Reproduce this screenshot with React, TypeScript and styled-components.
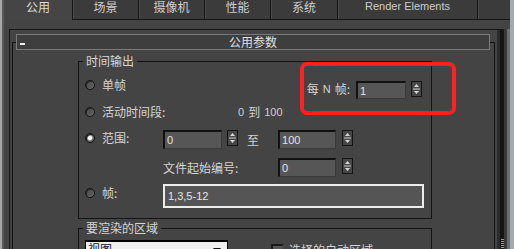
import React from 'react';
import styled, { createGlobalStyle, css } from 'styled-components';

const GlobalStyle = createGlobalStyle`
  html, body { margin: 0; padding: 0; background: #444; }
  body { font-family: "Noto Sans CJK SC", "Liberation Sans", sans-serif; }
`;

const Screen = styled.div`
  position: relative;
  width: 514px;
  height: 249px;
  overflow: hidden;
  display: flex;
  background: #444;
  color: #d4d4d4;
  font-family: "Noto Sans CJK SC", "Liberation Sans", sans-serif;
  font-size: 12px;
`;

const EdgeLeft = styled.div`
  flex: none;
  width: 2px;
  background: #a8a8a8;
  border-right: 2px solid #5a5a5a;
`;

const EdgeRight = styled.div`
  flex: none;
  width: 4px;
  background: #a3abb1;
`;

const Main = styled.div`
  flex: 1;
  min-width: 0;
  display: flex;
  flex-direction: column;
`;

const TabBar = styled.div`
  flex: none;
  display: flex;
  height: 20px;
`;

const Tab = styled.div<{ $w: number; $active?: boolean; $latin?: boolean }>`
  flex: none;
  box-sizing: border-box;
  width: ${p => p.$w}px;
  height: 20px;
  text-align: center;
  line-height: 13px;
  white-space: nowrap;
  ${p =>
    p.$active
      ? css`
          background: #454545;
          color: #dcdcdc;
        `
      : css`
          background: #3b3b3b;
          color: #cdcdcd;
          border-left: 1px solid #151515;
          border-bottom: 1px solid #151515;
          box-shadow: inset 1px 0 #4b4b4b;
        `}
  ${p =>
    p.$latin &&
    css`
      font-family: "Liberation Sans", sans-serif;
      font-size: 11px;
      line-height: 12px;
    `}
`;

const Body = styled.div`
  flex: 1;
  display: flex;
  padding: 9px 0 0 5px;
  min-height: 0;
`;

const Panel = styled.div`
  flex: none;
  display: flex;
  border-left: 1px solid #161616;
  border-top: 1px solid #161616;
  padding-left: 2px;
`;

const Gutter = styled.div`
  flex: 1;
  background: #393939;
  border-right: 3px solid #6e6e6e;
`;

const Scrollbar = styled.div`
  flex: none;
  width: 7px;
  margin-left: 2px;
  display: flex;
  flex-direction: column;
  justify-content: flex-end;
  background: linear-gradient(to right, #2b2b2b 0 3px, #141414 3px 7px);
`;

const Grip = styled.div`
  width: 3px;
  height: 12px;
  margin: 0 0 -2px 4px;
  background: repeating-linear-gradient(to bottom, #9a9a9a 0 1px, #1a1a1a 1px 2px);
`;

const Rollout = styled.div`
  flex: none;
  box-sizing: border-box;
  width: 483px;
  margin-top: 12px;
  border: 1px solid #121212;
  border-bottom: none;
  padding: 0 4px 0 3px;
`;

const RolloutHeader = styled.div`
  box-sizing: border-box;
  height: 16px;
  margin-top: -9px;
  border: 1px solid #7a7a7a;
  background: #3e3e3e;
  display: grid;
  grid-template-columns: 1fr auto 1fr;
  align-items: center;
`;

const Collapse = styled.span`
  justify-self: start;
  align-self: end;
  width: 5px;
  height: 2px;
  margin: 0 0 4px 3px;
  background: #f2f2f2;
`;

const HeaderTitle = styled.span`
  line-height: 14px;
  color: #e2e2e2;
`;

const Group = styled.fieldset<{ $gap: number }>`
  box-sizing: border-box;
  width: 354px;
  margin: ${p => p.$gap}px 0 0 62px;
  padding: 0;
  min-width: 0;
  border: 1px solid #141414;
`;

const GroupTitle = styled.legend`
  margin-left: 4px;
  padding: 0 3px;
  line-height: 14px;
  font-size: 12px;
  color: #d6d6d6;
`;

const GroupBody = styled.div<{ $top?: number; $bottom?: number }>`
  display: flex;
  flex-direction: column;
  padding: ${p => p.$top ?? 0}px 9px ${p => p.$bottom ?? 0}px 6px;
`;

const Row = styled.div<{ $h: number; $mt: number; $align?: string }>`
  display: flex;
  align-items: ${p => p.$align ?? 'center'};
  height: ${p => p.$h}px;
  margin-top: ${p => p.$mt}px;
`;

const RadioItem = styled.div<{ $lift?: number }>`
  flex: none;
  width: 78px;
  height: 18px;
  display: flex;
  align-items: center;
  gap: 7px;
  margin-bottom: ${p => (p.$lift ?? 0) * 2}px;
`;

const Radio = styled.span<{ $on?: boolean }>`
  flex: none;
  box-sizing: border-box;
  width: 10px;
  height: 10px;
  border-radius: 50%;
  border: 1px solid #121212;
  box-shadow: inset -1px -1px 0 #6a6a6a, inset 1px 1px 0 #2a2a2a;
  background: ${p =>
    p.$on
      ? 'radial-gradient(circle, #ffffff 0 1.6px, #bdbdbd 2.3px, #5a5a5a 3.2px)'
      : '#555555'};
`;

const Label = styled.span<{ $w?: number }>`
  white-space: nowrap;
  line-height: 14px;
  ${p => p.$w !== undefined && css`width: ${p.$w}px; flex: none;`}
`;

const Num = styled.span`
  font-family: "Liberation Sans", sans-serif;
  font-size: 11px;
`;

const RangeText = styled.span`
  margin-left: 75px;
  display: flex;
  align-items: center;
  gap: 4px;
  color: #cfcfcf;
  line-height: 14px;
`;

const Field = styled.div<{ $w: number; $h: number }>`
  flex: none;
  box-sizing: border-box;
  width: ${p => p.$w}px;
  height: ${p => p.$h}px;
  padding-left: 2px;
  display: flex;
  align-items: center;
  background: #565656;
  border-top: 2px solid #111;
  border-left: 2px solid #111;
  border-right: 1px solid #393939;
  border-bottom: 1px solid #393939;
  color: #e4e4e4;
  font-family: "Liberation Sans", sans-serif;
  font-size: 11px;
`;

const WideField = styled.div`
  flex: none;
  box-sizing: border-box;
  width: 261px;
  height: 24px;
  padding-left: 3px;
  display: flex;
  align-items: center;
  background: #555;
  border: 2px solid #ececec;
  color: #e6e6e6;
  font-family: "Liberation Sans", sans-serif;
  font-size: 11px;
`;

const SpinBox = styled.span<{ $ml: number }>`
  flex: none;
  display: flex;
  align-self: flex-start;
  margin-left: ${p => p.$ml}px;
`;

const EveryN = styled.div`
  margin: 5px 0 0 auto;
  display: flex;
  align-items: flex-start;
`;

const EveryLabel = styled.span`
  display: flex;
  gap: 4px;
  margin: 1px 6px 0 0;
  line-height: 14px;
  white-space: nowrap;
`;

const To = styled.span`
  margin: 0 19px 0 9px;
  line-height: 14px;
`;

const Indent = styled.span`
  width: 78px;
  flex: none;
`;

const Dropdown = styled.div`
  flex: none;
  box-sizing: border-box;
  width: 143px;
  height: 20px;
  border: 1px solid #000;
  border-top-width: 2px;
  background: #efefef;
  color: #111;
  display: flex;
  align-items: flex-start;
  justify-content: space-between;
  padding: 0 6px 0 2px;
  line-height: 14px;
`;

const Check = styled.span`
  flex: none;
  box-sizing: border-box;
  width: 13px;
  height: 13px;
  margin: 4px 0 0 43px;
  border: 2px solid #1a1a1a;
  border-right-color: #4a4a4a;
  border-bottom-color: #4a4a4a;
  background: #565656;
`;

const CheckLabel = styled.span`
  margin: 3px 0 0 5px;
  line-height: 14px;
  white-space: nowrap;
`;

const Highlight = styled.div`
  position: absolute;
  left: 300px;
  top: 62px;
  width: 156px;
  height: 53px;
  box-sizing: border-box;
  border: 4px solid #ff2121;
  border-radius: 7px;
  pointer-events: none;
`;

const Spinner = ({ ml }: { ml: number }) => (
  <SpinBox $ml={ml}>
    <svg width="11" height="16" viewBox="0 0 11 16">
      <rect x="0.5" y="0.5" width="10" height="15" fill="#474747" stroke="#141414" />
      <path d="M5.5 3 L8 6 L3 6 Z" fill="#d8d8d8" />
      <line x1="2" y1="8" x2="9" y2="8" stroke="#cfcfcf" strokeWidth="1" />
      <path d="M3 10 L8 10 L5.5 13 Z" fill="#d8d8d8" />
    </svg>
  </SpinBox>
);

const tabs = [
  { t: '公用', w: 68, active: true },
  { t: '场景', w: 66 },
  { t: '摄像机', w: 66 },
  { t: '性能', w: 66 },
  { t: '系统', w: 67 },
  { t: 'Render Elements', w: 140, latin: true },
  { t: '', w: 33 },
];

export default function App() {
  return (
    <>
      <GlobalStyle />
      <Screen>
        <EdgeLeft />
        <Main>
          <TabBar>
            {tabs.map((tb, i) => (
              <Tab key={i} $w={tb.w} $active={tb.active} $latin={tb.latin}>
                {tb.t}
              </Tab>
            ))}
          </TabBar>
          <Body>
            <Panel>
              <Rollout>
                <RolloutHeader>
                  <Collapse />
                  <HeaderTitle>公用参数</HeaderTitle>
                  <span />
                </RolloutHeader>

                <Group $gap={4}>
                  <GroupTitle>时间输出</GroupTitle>
                  <GroupBody $bottom={10}>
                    <Row $h={24} $mt={8} $align="flex-start">
                      <RadioItem>
                        <Radio />
                        <Label>单帧</Label>
                      </RadioItem>
                      <EveryN>
                        <EveryLabel>
                          <span>每</span>
                          <Num>N</Num>
                          <span>帧:</span>
                        </EveryLabel>
                        <Field $w={50} $h={18}>1</Field>
                        <Spinner ml={5} />
                      </EveryN>
                    </Row>
                    <Row $h={18} $mt={3}>
                      <RadioItem>
                        <Radio />
                        <Label>活动时间段:</Label>
                      </RadioItem>
                      <RangeText>
                        <Num>0</Num>
                        <span>到</span>
                        <Num>100</Num>
                      </RangeText>
                    </Row>
                    <Row $h={19} $mt={9}>
                      <RadioItem $lift={2}>
                        <Radio $on />
                        <Label>范围:</Label>
                      </RadioItem>
                      <Field $w={59} $h={19}>0</Field>
                      <Spinner ml={5} />
                      <To>至</To>
                      <Field $w={58} $h={19}>100</Field>
                      <Spinner ml={6} />
                    </Row>
                    <Row $h={19} $mt={9}>
                      <Indent />
                      <Label $w={115}>文件起始编号:</Label>
                      <Field $w={58} $h={19}>0</Field>
                      <Spinner ml={6} />
                    </Row>
                    <Row $h={24} $mt={7}>
                      <RadioItem $lift={3}>
                        <Radio />
                        <Label>帧:</Label>
                      </RadioItem>
                      <WideField>1,3,5-12</WideField>
                    </Row>
                  </GroupBody>
                </Group>

                <Group $gap={2}>
                  <GroupTitle>要渲染的区域</GroupTitle>
                  <GroupBody $top={5}>
                    <Row $h={20} $mt={0} $align="flex-start">
                      <Dropdown>
                        <span>视图</span>
                        <svg width="8" height="8" viewBox="0 0 8 8" style={{ marginTop: 5 }}>
                          <path d="M0 1 L8 1 L4 6 Z" fill="#111" />
                        </svg>
                      </Dropdown>
                      <Check />
                      <CheckLabel>选择的自动区域</CheckLabel>
                    </Row>
                  </GroupBody>
                </Group>
              </Rollout>
              <Scrollbar>
                <Grip />
              </Scrollbar>
            </Panel>
            <Gutter />
          </Body>
        </Main>
        <EdgeRight />
        <Highlight />
      </Screen>
    </>
  );
}
